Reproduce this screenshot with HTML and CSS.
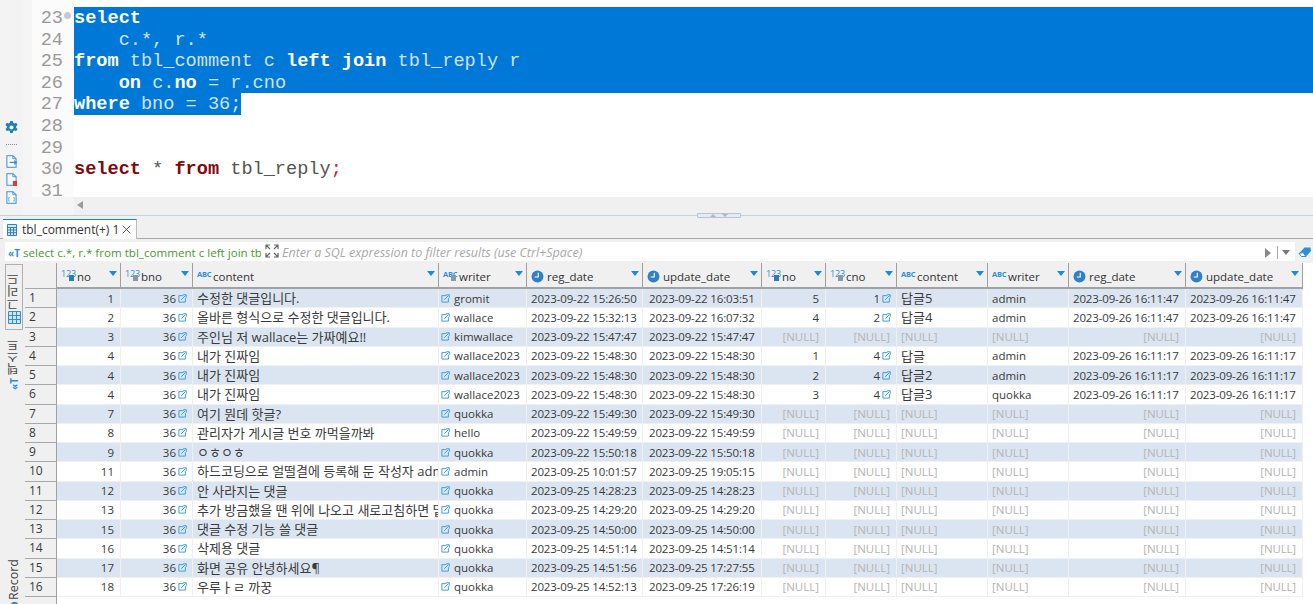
FILE: index.html
```html
<!DOCTYPE html>
<html lang="ko">
<head>
<meta charset="utf-8">
<title>tbl_comment</title>
<link rel="stylesheet" href="styles.css">
</head>
<body>
<svg class="defs" width="0" height="0" aria-hidden="true">
  <symbol id="lnk" viewBox="0 0 10 10"><path d="M6 1.8H1v7.2h7.2V4.6" fill="none" stroke="currentColor" stroke-width="1.1"/><path d="M3.6 6.4 8.2 1.8M5.8.8h3.4v3.4" fill="none" stroke="currentColor" stroke-width="1.1"/></symbol>
  <symbol id="clk" viewBox="0 0 14 14"><circle cx="7" cy="7" r="6.4" fill="#2f80c8"/><path d="M7.8 3v4.6H4" fill="none" stroke="#fff" stroke-width="1.2"/></symbol>
  <symbol id="doc" viewBox="0 0 12 14"><path d="M1 .7h6.5L11 4v9.3H1z" fill="#fff" stroke="#2f90d4" stroke-width="1.1"/><path d="M7.5.7V4H11" fill="none" stroke="#2f90d4"/></symbol>
</svg>
<div class="app">
  <section class="editor">
    <aside class="strip">
      <svg class="gear" viewBox="0 0 14 14"><path d="M5.6 0h2.8l.4 2 1.4.7 1.9-.8 1.4 2.4-1.5 1.3v1.6l1.5 1.3-1.4 2.4-1.9-.8-1.4.7-.4 2H5.6l-.4-2-1.4-.7-1.9.8L.5 8.500l1.500-1.300V5.600L.5 4.300l1.400-2.400 1.900.8 1.400-.7z" fill="#1f7fb8"/><circle cx="7" cy="7" r="2.200" fill="#eaf3f9"/></svg>
      <div class="dots"></div>
      <svg class="sdoc" viewBox="0 0 12 14"><use href="#doc"/><path d="M4 8h7M9 6l2.500 2L9 10" fill="none" stroke="#2f90d4" stroke-width="1.200"/></svg>
      <svg class="sdoc" viewBox="0 0 12 14"><use href="#doc"/><rect x="7.500" y="8.500" width="4.500" height="5.500" fill="#e23b2e"/></svg>
      <svg class="sdoc last" viewBox="0 0 12 14"><use href="#doc"/><path d="M4 7H3v4h1M8 7h1v4H8" fill="none" stroke="#2f90d4" stroke-width=".8"/></svg>
    </aside>
    <div class="main">
      <div class="pane">
        <div class="gutter">
          <div class="ln">23<i class="fold"></i></div>
          <div class="ln">24</div>
          <div class="ln">25</div>
          <div class="ln">26</div>
          <div class="ln">27</div>
          <div class="ln">28</div>
          <div class="ln">29</div>
          <div class="ln">30</div>
          <div class="ln">31</div>
        </div>
        <div class="code">
          <div class="l sel"><b>select</b></div>
          <div class="l sel">    c.*, r.*</div>
          <div class="l sel"><b>from</b> tbl_comment c <b>left join</b> tbl_reply r</div>
          <div class="l sel">    <b>on</b> c.<b>no</b> = r.cno</div>
          <div class="l"><span class="sel"><b>where</b> bno = 36;</span></div>
          <div class="l">&nbsp;</div>
          <div class="l">&nbsp;</div>
          <div class="l"><b>select</b> * <b>from</b> tbl_reply<span class="semi">;</span></div>
          <div class="l">&nbsp;</div>
        </div>
      </div>
      <div class="hscroll"><i class="larrow"></i></div>
    </div>
  </section>

  <div class="sash"><div class="grip"><i class="up"></i><i class="dn"></i></div></div>

  <section class="results">
    <div class="tabbar">
      <div class="tab">
        <svg class="tabicon" viewBox="0 0 10 12"><path d="M.5.500h9v11h-9zM.5 3.500h9M.5 6h9M.5 8.700h9M3.500 3.500v8M6.500 3.500v8" fill="#d7e8f6" stroke="#2f80c8"/></svg>
        <span class="tabname">tbl_comment(+) 1</span>
        <svg class="close" viewBox="0 0 9 9"><path d="M.7.700l7.600 7.600M8.300.700.7 8.300" stroke="#555" stroke-width="1"/></svg>
      </div>
    </div>
    <div class="filterbar">
      <div class="filter">
        <span class="sqlicon">«T</span>
        <span class="sql">select c.*, r.* from tbl_comment c left join tbl_reply r on c.no = r.cno</span>
        <svg class="expand" viewBox="0 0 14 14"><path d="M1 5V1h4M9 1h4v4M13 9v4H9M5 13H1V9M1 1l4 4M13 1 9 5M13 13 9 9M1 13l4-4" fill="none" stroke="#666" stroke-width="1.200"/></svg>
        <span class="hint">Enter a SQL expression to filter results (use Ctrl+Space)</span>
        <i class="go"></i><i class="vsep"></i><i class="drop"></i>
      </div>
      <svg class="eraser" viewBox="0 0 14 12"><path d="M1 7.500 6.500 1.500h6L13 5 8 10.500H3.500z" fill="#2f8fd6"/><path d="M1 7.500 3.500 10.500H8L5 6.500z" fill="#fff" stroke="#2f8fd6"/></svg>
    </div>
    <div class="body">
      <nav class="side">
        <div class="stab active"><span class="vt big">그리드</span>
          <svg class="gridicon" viewBox="0 0 13 13"><path d="M.5.500h12v12H.5zM.5 4.500h12M.5 8.500h12M4.500.500v12M8.500.500v12" fill="#cfe4f5" stroke="#2f90d4"/></svg>
        </div>
        <div class="stab"><span class="vt">텍스트</span><span class="vt ticon">«T</span></div>
        <div class="stab rec"><span class="vt">Record</span><svg class="recicon" viewBox="0 0 12 12"><circle cx="6" cy="6" r="5" fill="#2f8fd6"/></svg></div>
      </nav>
      <div class="grid">
        <div class="row head">
          <div class="h rn"></div>
          <div class="h"><span class="ty">123<i class="key"></i></span><span>no</span><i class="sort"></i></div>
          <div class="h"><span class="ty">123<i class="key g"></i></span><span>bno</span><i class="sort"></i></div>
          <div class="h"><span class="ty abc">ABC</span><span>content</span><i class="sort"></i></div>
          <div class="h"><span class="ty abc">ABC<i class="key g"></i></span><span>writer</span><i class="sort"></i></div>
          <div class="h"><svg class="clk"><use href="#clk"/></svg><span>reg_date</span><i class="sort"></i></div>
          <div class="h"><svg class="clk"><use href="#clk"/></svg><span>update_date</span><i class="sort"></i></div>
          <div class="h"><span class="ty">123<i class="key"></i></span><span>no</span><i class="sort"></i></div>
          <div class="h"><span class="ty">123<i class="key g"></i></span><span>cno</span><i class="sort"></i></div>
          <div class="h"><span class="ty abc">ABC</span><span>content</span><i class="sort"></i></div>
          <div class="h"><span class="ty abc">ABC</span><span>writer</span><i class="sort"></i></div>
          <div class="h"><svg class="clk"><use href="#clk"/></svg><span>reg_date</span><i class="sort"></i></div>
          <div class="h"><svg class="clk"><use href="#clk"/></svg><span>update_date</span><i class="sort"></i></div>
        </div>

        <div class="row odd"><div class="rn">1</div><div class="c r">1</div><div class="c r">36<svg class="lk"><use href="#lnk"/></svg></div><div class="c k">수정한 댓글입니다.</div><div class="c w"><svg class="lk"><use href="#lnk"/></svg>gromit</div><div class="c">2023-09-22 15:26:50</div><div class="c">2023-09-22 16:03:51</div><div class="c r">5</div><div class="c r">1<svg class="lk"><use href="#lnk"/></svg></div><div class="c k">답글5</div><div class="c">admin</div><div class="c">2023-09-26 16:11:47</div><div class="c">2023-09-26 16:11:47</div></div>
        <div class="row"><div class="rn">2</div><div class="c r">2</div><div class="c r">36<svg class="lk"><use href="#lnk"/></svg></div><div class="c k">올바른 형식으로 수정한 댓글입니다.</div><div class="c w"><svg class="lk"><use href="#lnk"/></svg>wallace</div><div class="c">2023-09-22 15:32:13</div><div class="c">2023-09-22 16:07:32</div><div class="c r">4</div><div class="c r">2<svg class="lk"><use href="#lnk"/></svg></div><div class="c k">답글4</div><div class="c">admin</div><div class="c">2023-09-26 16:11:47</div><div class="c">2023-09-26 16:11:47</div></div>
        <div class="row odd"><div class="rn">3</div><div class="c r">3</div><div class="c r">36<svg class="lk"><use href="#lnk"/></svg></div><div class="c k">주인님 저 wallace는 가짜예요!!</div><div class="c w"><svg class="lk"><use href="#lnk"/></svg>kimwallace</div><div class="c">2023-09-22 15:47:47</div><div class="c">2023-09-22 15:47:47</div><div class="c r n">[NULL]</div><div class="c r n">[NULL]</div><div class="c n">[NULL]</div><div class="c n">[NULL]</div><div class="c r n">[NULL]</div><div class="c r n">[NULL]</div></div>
        <div class="row"><div class="rn">4</div><div class="c r">4</div><div class="c r">36<svg class="lk"><use href="#lnk"/></svg></div><div class="c k">내가 진짜임</div><div class="c w"><svg class="lk"><use href="#lnk"/></svg>wallace2023</div><div class="c">2023-09-22 15:48:30</div><div class="c">2023-09-22 15:48:30</div><div class="c r">1</div><div class="c r">4<svg class="lk"><use href="#lnk"/></svg></div><div class="c k">답글</div><div class="c">admin</div><div class="c">2023-09-26 16:11:17</div><div class="c">2023-09-26 16:11:17</div></div>
        <div class="row odd"><div class="rn">5</div><div class="c r">4</div><div class="c r">36<svg class="lk"><use href="#lnk"/></svg></div><div class="c k">내가 진짜임</div><div class="c w"><svg class="lk"><use href="#lnk"/></svg>wallace2023</div><div class="c">2023-09-22 15:48:30</div><div class="c">2023-09-22 15:48:30</div><div class="c r">2</div><div class="c r">4<svg class="lk"><use href="#lnk"/></svg></div><div class="c k">답글2</div><div class="c">admin</div><div class="c">2023-09-26 16:11:17</div><div class="c">2023-09-26 16:11:17</div></div>
        <div class="row"><div class="rn">6</div><div class="c r">4</div><div class="c r">36<svg class="lk"><use href="#lnk"/></svg></div><div class="c k">내가 진짜임</div><div class="c w"><svg class="lk"><use href="#lnk"/></svg>wallace2023</div><div class="c">2023-09-22 15:48:30</div><div class="c">2023-09-22 15:48:30</div><div class="c r">3</div><div class="c r">4<svg class="lk"><use href="#lnk"/></svg></div><div class="c k">답글3</div><div class="c">quokka</div><div class="c">2023-09-26 16:11:17</div><div class="c">2023-09-26 16:11:17</div></div>
        <div class="row odd"><div class="rn">7</div><div class="c r">7</div><div class="c r">36<svg class="lk"><use href="#lnk"/></svg></div><div class="c k">여기 뭔데 핫글?</div><div class="c w"><svg class="lk"><use href="#lnk"/></svg>quokka</div><div class="c">2023-09-22 15:49:30</div><div class="c">2023-09-22 15:49:30</div><div class="c r n">[NULL]</div><div class="c r n">[NULL]</div><div class="c n">[NULL]</div><div class="c n">[NULL]</div><div class="c r n">[NULL]</div><div class="c r n">[NULL]</div></div>
        <div class="row"><div class="rn">8</div><div class="c r">8</div><div class="c r">36<svg class="lk"><use href="#lnk"/></svg></div><div class="c k">관리자가 게시글 번호 까먹을까봐</div><div class="c w"><svg class="lk"><use href="#lnk"/></svg>hello</div><div class="c">2023-09-22 15:49:59</div><div class="c">2023-09-22 15:49:59</div><div class="c r n">[NULL]</div><div class="c r n">[NULL]</div><div class="c n">[NULL]</div><div class="c n">[NULL]</div><div class="c r n">[NULL]</div><div class="c r n">[NULL]</div></div>
        <div class="row odd"><div class="rn">9</div><div class="c r">9</div><div class="c r">36<svg class="lk"><use href="#lnk"/></svg></div><div class="c k">ㅇㅎㅇㅎ</div><div class="c w"><svg class="lk"><use href="#lnk"/></svg>quokka</div><div class="c">2023-09-22 15:50:18</div><div class="c">2023-09-22 15:50:18</div><div class="c r n">[NULL]</div><div class="c r n">[NULL]</div><div class="c n">[NULL]</div><div class="c n">[NULL]</div><div class="c r n">[NULL]</div><div class="c r n">[NULL]</div></div>
        <div class="row"><div class="rn">10</div><div class="c r">11</div><div class="c r">36<svg class="lk"><use href="#lnk"/></svg></div><div class="c k">하드코딩으로 얼떨결에 등록해 둔 작성자 admin</div><div class="c w"><svg class="lk"><use href="#lnk"/></svg>admin</div><div class="c">2023-09-25 10:01:57</div><div class="c">2023-09-25 19:05:15</div><div class="c r n">[NULL]</div><div class="c r n">[NULL]</div><div class="c n">[NULL]</div><div class="c n">[NULL]</div><div class="c r n">[NULL]</div><div class="c r n">[NULL]</div></div>
        <div class="row odd"><div class="rn">11</div><div class="c r">12</div><div class="c r">36<svg class="lk"><use href="#lnk"/></svg></div><div class="c k">안 사라지는 댓글</div><div class="c w"><svg class="lk"><use href="#lnk"/></svg>quokka</div><div class="c">2023-09-25 14:28:23</div><div class="c">2023-09-25 14:28:23</div><div class="c r n">[NULL]</div><div class="c r n">[NULL]</div><div class="c n">[NULL]</div><div class="c n">[NULL]</div><div class="c r n">[NULL]</div><div class="c r n">[NULL]</div></div>
        <div class="row"><div class="rn">12</div><div class="c r">13</div><div class="c r">36<svg class="lk"><use href="#lnk"/></svg></div><div class="c k">추가 방금했을 땐 위에 나오고 새로고침하면 밑으로</div><div class="c w"><svg class="lk"><use href="#lnk"/></svg>quokka</div><div class="c">2023-09-25 14:29:20</div><div class="c">2023-09-25 14:29:20</div><div class="c r n">[NULL]</div><div class="c r n">[NULL]</div><div class="c n">[NULL]</div><div class="c n">[NULL]</div><div class="c r n">[NULL]</div><div class="c r n">[NULL]</div></div>
        <div class="row odd"><div class="rn">13</div><div class="c r">15</div><div class="c r">36<svg class="lk"><use href="#lnk"/></svg></div><div class="c k">댓글 수정 기능 쓸 댓글</div><div class="c w"><svg class="lk"><use href="#lnk"/></svg>quokka</div><div class="c">2023-09-25 14:50:00</div><div class="c">2023-09-25 14:50:00</div><div class="c r n">[NULL]</div><div class="c r n">[NULL]</div><div class="c n">[NULL]</div><div class="c n">[NULL]</div><div class="c r n">[NULL]</div><div class="c r n">[NULL]</div></div>
        <div class="row"><div class="rn">14</div><div class="c r">16</div><div class="c r">36<svg class="lk"><use href="#lnk"/></svg></div><div class="c k">삭제용 댓글</div><div class="c w"><svg class="lk"><use href="#lnk"/></svg>quokka</div><div class="c">2023-09-25 14:51:14</div><div class="c">2023-09-25 14:51:14</div><div class="c r n">[NULL]</div><div class="c r n">[NULL]</div><div class="c n">[NULL]</div><div class="c n">[NULL]</div><div class="c r n">[NULL]</div><div class="c r n">[NULL]</div></div>
        <div class="row odd"><div class="rn">15</div><div class="c r">17</div><div class="c r">36<svg class="lk"><use href="#lnk"/></svg></div><div class="c k">화면 공유 안녕하세요¶</div><div class="c w"><svg class="lk"><use href="#lnk"/></svg>quokka</div><div class="c">2023-09-25 14:51:56</div><div class="c">2023-09-25 17:27:55</div><div class="c r n">[NULL]</div><div class="c r n">[NULL]</div><div class="c n">[NULL]</div><div class="c n">[NULL]</div><div class="c r n">[NULL]</div><div class="c r n">[NULL]</div></div>
        <div class="row"><div class="rn">16</div><div class="c r">18</div><div class="c r">36<svg class="lk"><use href="#lnk"/></svg></div><div class="c k">우루ㅏㄹ 까꿍</div><div class="c w"><svg class="lk"><use href="#lnk"/></svg>quokka</div><div class="c">2023-09-25 14:52:13</div><div class="c">2023-09-25 17:26:19</div><div class="c r n">[NULL]</div><div class="c r n">[NULL]</div><div class="c n">[NULL]</div><div class="c n">[NULL]</div><div class="c r n">[NULL]</div><div class="c r n">[NULL]</div></div>
        <div class="row"><div class="rn"></div></div>
      </div>
    </div>
  </section>
</div>
</body>
</html>
```

FILE: styles.css
```css
* { box-sizing: border-box; }
html, body { margin: 0; height: 100%; overflow: hidden; background: #f0f0f0; }
body { font: 11.5px "Open Sans", "Noto Sans CJK KR", sans-serif; color: #3a3a3a; }
i { display: block; }
.defs { position: absolute; }
.app { display: flex; flex-direction: column; height: 604px; }

/* editor */
.editor { display: flex; height: 215px; flex: none; }
.strip { width: 23px; flex: none; background: #f3f3f3; display: flex; flex-direction: column; align-items: center; padding-bottom: 11px; justify-content: flex-end; }
.gear { width: 13px; height: 13px; margin-bottom: 10px; }
.dots { width: 11px; border-top: 1px dotted #8a8a8a; margin-bottom: 10px; }
.sdoc { width: 11px; height: 13px; margin-bottom: 5px; }
.sdoc.last { margin-bottom: 0; }
.main { flex: 1; min-width: 0; display: flex; flex-direction: column; padding-left: 9px; background: #f5f5f5; }
.pane { display: flex; height: 197px; flex: none; overflow: hidden; background: #fff; font: 18.6px/24.6px "Liberation Mono", monospace; }
.gutter { width: 42px; flex: none; padding-top: 7px; background: #fbfbfb; color: #9a9a9a; }
.ln { display: flex; justify-content: flex-end; padding-right: 11px; position: relative; height: 21.6px; }
.fold { position: absolute; right: 3px; top: 5px; width: 7px; height: 7px; border-radius: 50%; background: #c9c9c9; }
.code { flex: 1; padding-top: 7px; color: #555; }
.code b { color: #7f0a0a; font-weight: 700; }
.semi { color: #e01b1b; }
.l { height: 21.6px; white-space: pre; }
.l .sel { display: inline-block; height: 21.6px; vertical-align: top; }
.sel { background: #0078d7; color: #cfe2f5; }
.code .sel b { color: #fff; }
.hscroll { flex: 1; background: #f0f0f0; margin-left: 42px; padding: 4px 0 0 3px; }
.larrow { width: 0; height: 0; border: 4px solid transparent; border-left-width: 0; border-right: 6px solid #9a9a9a; }

/* sash */
.sash { height: 4px; flex: none; position: relative; background: #f0f0f0; }
.sash::before { content: ""; display: block; height: 1px; background: #c4d3e4; }
.grip { position: absolute; left: 697px; top: -2px; width: 44px; height: 5px; border: 1px solid #b5c4d6; border-radius: 1px; background: #e6ebf2; display: flex; justify-content: center; align-items: center; gap: 6px; }
.up { border: 3px solid transparent; border-top: 0; border-bottom: 3px solid #a9b8ca; }
.dn { border: 3px solid transparent; border-bottom: 0; border-top: 3px solid #a9b8ca; }

/* results */
.results { flex: 1; min-height: 0; display: flex; flex-direction: column; }
.tabbar { height: 20px; flex: none; padding-left: 3px; border-bottom: 1px solid #a9a9a9; }
.tab { width: 134px; height: 20px; background: #fff; border-top: 1px solid #1c7fd0; border-right: 1px solid #bbb; display: flex; align-items: center; padding: 0 4px; font-size: 12px; color: #333; }
.tabicon { width: 10px; height: 12px; flex: none; margin-right: 5px; }
.tabname { flex: 1; white-space: nowrap; }
.close { width: 9px; height: 9px; flex: none; margin-right: 1px; }
.filterbar { height: 24px; flex: none; display: flex; align-items: flex-start; padding: 3px 0 0 5px; }
.filter { width: 1290px; height: 19px; background: #fff; display: flex; align-items: center; padding: 2px 0 0 3px; }
.sqlicon { width: 15px; flex: none; color: #2f8fd6; font-size: 10px; font-weight: 700; }
.sql { width: 238px; flex: none; overflow: hidden; white-space: nowrap; color: #3f9e2a; font-size: 11.6px; }
.expand { width: 14px; height: 14px; flex: none; margin: -3px 3px 0 4px; }
.hint { flex: 1; font-style: italic; color: #a8a8a8; font-size: 12.5px; white-space: nowrap; }
.go { width: 0; height: 0; border: 5px solid transparent; border-right: 0; border-left: 6px solid #8a8a8a; margin-right: 6px; }
.vsep { width: 1px; height: 13px; background: #aaa; margin-right: 4px; }
.drop { width: 0; height: 0; border: 4px solid transparent; border-bottom: 0; border-top: 5px solid #777; margin-right: 5px; }
.eraser { width: 14px; height: 12px; margin: 4px 0 0 3px; flex: none; }

.body { flex: 1; min-height: 0; display: flex; }
.side { width: 25px; flex: none; padding: 1px 2px 0 5px; display: flex; flex-direction: column; height: 341px; overflow: hidden; }
.stab { display: flex; flex-direction: column; align-items: center; font-size: 12px; color: #444; width: 18px; flex: none; }
.stab.active { height: 66px; border: 1px solid #b0b0b0; background: #f0f0f0; padding-top: 7px; margin-bottom: 9px; }
.vt { writing-mode: vertical-rl; transform: rotate(180deg); white-space: nowrap; line-height: 16px; }
.vt.big { font-size: 12.5px; }
.gridicon { width: 13px; height: 13px; margin-top: 1px; flex: none; }
.ticon { color: #2f8fd6; font-size: 10px; font-weight: 700; margin-top: 3px; }
.rec { margin-top: auto; margin-bottom: -6px; font-size: 12.5px; }
.recicon { width: 9px; height: 9px; flex: none; margin-top: 1px; }

.grid { flex: 1; min-width: 0; background: #fff; display: grid; grid-template-columns: 32px 64px 72px 246px 88px 116px 119px 64px 71px 91px 81px 117px 117px; grid-template-rows: 26px; grid-auto-rows: 19.25px; align-content: start; }
.row { display: contents; }
.h { display: flex; align-items: center; padding: 3px 3px 0 4px; background: #f0f0f0; border-right: 1px solid #a0a0a0; border-bottom: 2px solid #a2a2a2; font-size: 11.5px; color: #333; white-space: nowrap; min-width: 0; position: relative; }
.ty { position: relative; width: 15px; flex: none; margin-right: 1px; align-self: flex-start; margin-top: 3px; font-size: 9px; line-height: 10px; letter-spacing: -.2px; color: #2f8fd6; }
.ty.abc { font-weight: 700; font-size: 7.5px; letter-spacing: -.2px; }
.key { position: absolute; right: 2px; top: 6px; width: 5px; height: 6px; background: #2a7cba; }
.key.g { background: #8a97a5; }
.clk { width: 13px; height: 13px; flex: none; margin-right: 3px; align-self: flex-start; margin-top: 4px; }
.sort { margin-left: auto; width: 0; height: 0; border: 4px solid transparent; border-bottom: 0; border-top: 5px solid #1c8ad8; align-self: flex-start; margin-top: 5px; }
.rn { background: #f0f0f0; border-right: 1px solid #a0a0a0; border-bottom: 1px solid #a8a8a8; padding-left: 4px; font-size: 12px; line-height: 18px; color: #3a3a3a; grid-column: 1; }
.c { display: flex; align-items: center; padding: 0 4px; background: #fff; border-right: 1px solid #f0f0f0; border-bottom: 1px solid #f0f0f0; white-space: nowrap; overflow: hidden; min-width: 0; }
.odd .c { background: #dbe5f1; }
.c.r { justify-content: flex-end; padding-right: 6px; }
.c.k { font-size: 13px; padding-bottom: 1px; }
.c.w { padding-left: 2px; }
.c:nth-child(6), .c:nth-child(7), .c:nth-child(12), .c:nth-child(13) { letter-spacing: -.15px; }
.c:nth-child(7) { padding-left: 6px; }
.n { color: #b4b4b4; }
.lk { width: 9px; height: 9px; flex: none; color: #3aa0dc; margin-left: 2px; margin-right: -1px; }
.c.w .lk { margin: 0 4px 0 0; }
```
